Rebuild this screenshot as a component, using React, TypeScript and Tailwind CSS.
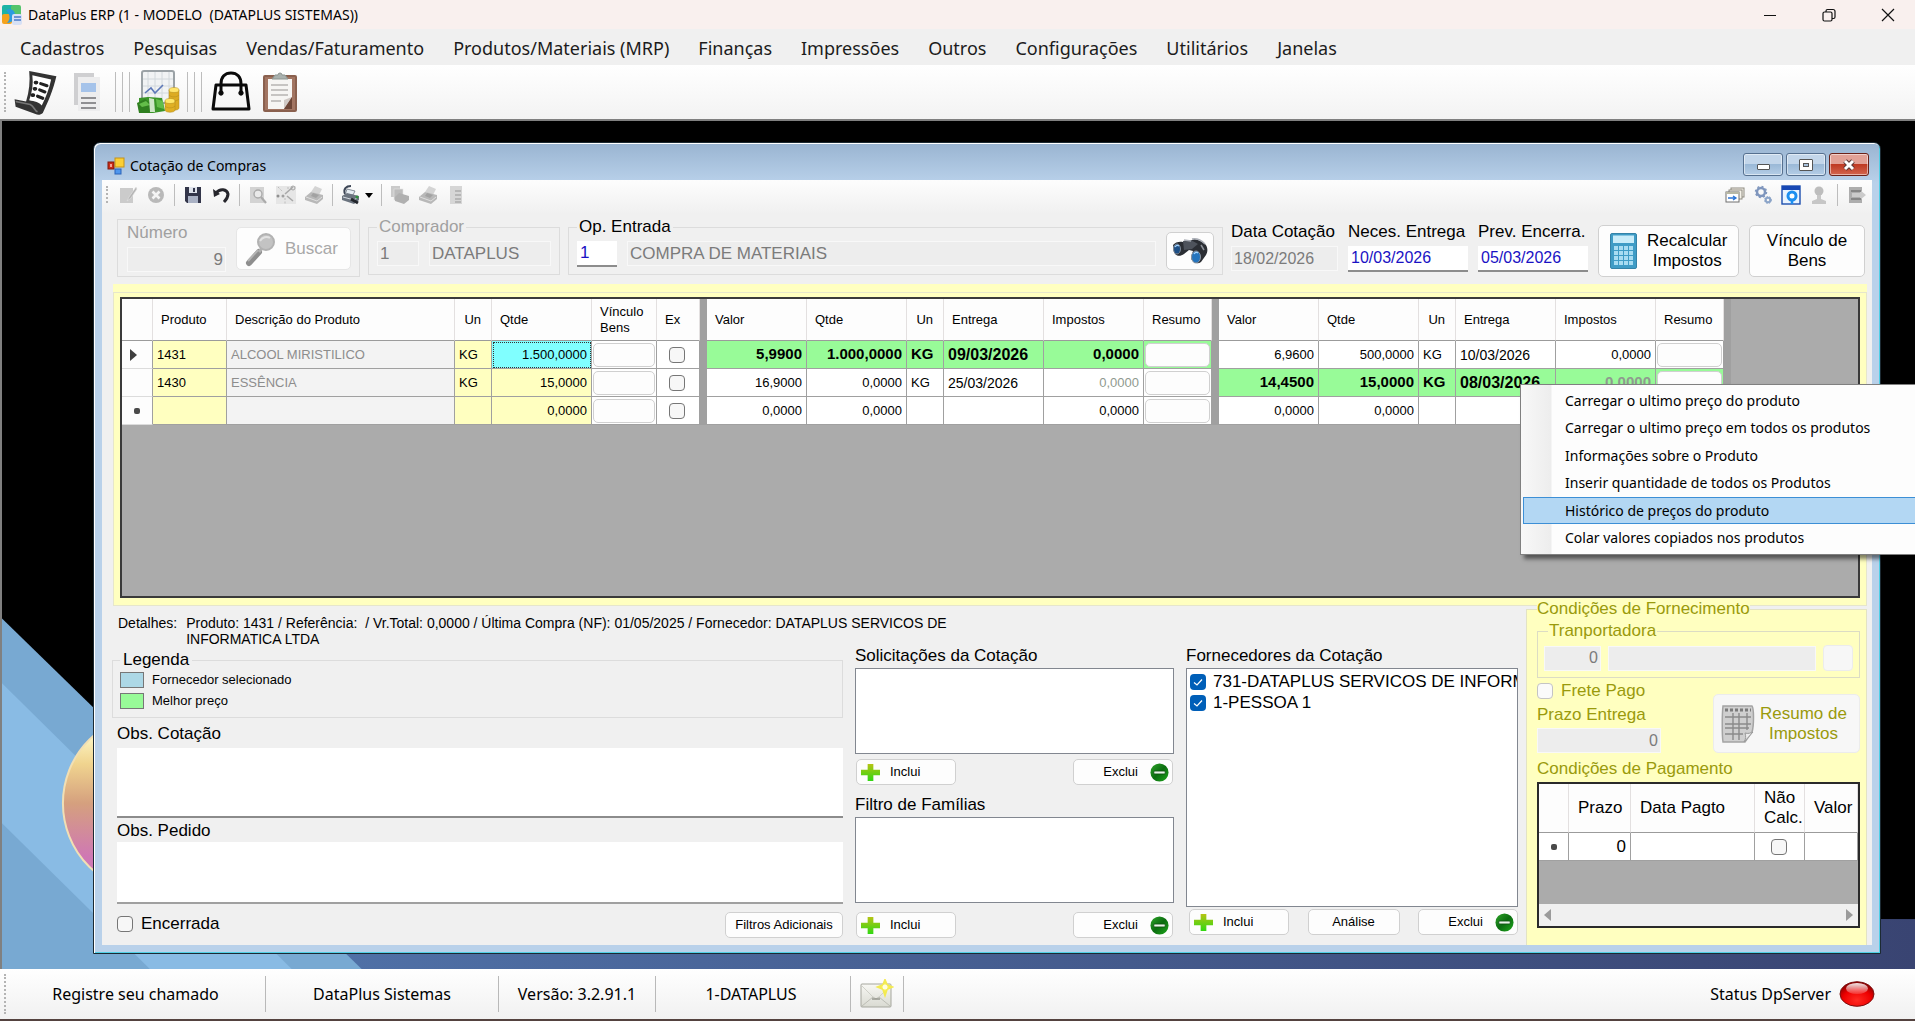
import React, { ReactNode } from "react";

const MENUS = [
  "Cadastros",
  "Pesquisas",
  "Vendas/Faturamento",
  "Produtos/Materiais (MRP)",
  "Finanças",
  "Impressões",
  "Outros",
  "Configurações",
  "Utilitários",
  "Janelas",
];

const CONTEXT_ITEMS = [
  "Carregar o ultimo preço do produto",
  "Carregar o ultimo preço em todos os produtos",
  "Informações sobre o Produto",
  "Inserir quantidade de todos os Produtos",
  "Histórico de preços do produto",
  "Colar valores copiados nos produtos",
];

type Offer = {
  valor: string;
  qtde: string;
  un: string;
  entrega: string;
  impostos: string;
  best?: boolean;
  taxDim?: boolean;
};

type Row = {
  marker: "current" | "none" | "new";
  produto: string;
  descricao: string;
  un: string;
  qtde: string;
  selected?: boolean;
  offers: Offer[];
};

const ROWS: Row[] = [
  {
    marker: "current",
    produto: "1431",
    descricao: "ALCOOL MIRISTILICO",
    un: "KG",
    qtde: "1.500,0000",
    selected: true,
    offers: [
      { valor: "5,9900", qtde: "1.000,0000", un: "KG", entrega: "09/03/2026", impostos: "0,0000", best: true },
      { valor: "6,9600", qtde: "500,0000", un: "KG", entrega: "10/03/2026", impostos: "0,0000" },
    ],
  },
  {
    marker: "none",
    produto: "1430",
    descricao: "ESSÊNCIA",
    un: "KG",
    qtde: "15,0000",
    offers: [
      { valor: "16,9000", qtde: "0,0000", un: "KG", entrega: "25/03/2026", impostos: "0,0000", taxDim: true },
      { valor: "14,4500", qtde: "15,0000", un: "KG", entrega: "08/03/2026", impostos: "0,0000", best: true, taxDim: true },
    ],
  },
  {
    marker: "new",
    produto: "",
    descricao: "",
    un: "",
    qtde: "0,0000",
    offers: [
      { valor: "0,0000", qtde: "0,0000", un: "", entrega: "", impostos: "0,0000" },
      { valor: "0,0000", qtde: "0,0000", un: "", entrega: "", impostos: "0,0000" },
    ],
  },
];

/* ---------- icons ---------- */

function AppLogo() {
  return (
    <svg viewBox="0 0 20 20" className="h-5 w-5">
      <rect x="0" y="0" width="12" height="12" rx="2" fill="#1fb3a6" />
      <rect x="9" y="0" width="10" height="13" rx="2" fill="#55c46c" />
      <rect x="0" y="9" width="10" height="10" rx="2" fill="#f6a21d" />
      <path d="M4 5c6-2 9 1 9 5s-3 8-8 8c4-4 3-9-1-13z" fill="#2b9be0" />
      <rect x="10" y="9" width="10" height="11" rx="2" fill="#d7e0f5" />
      <path d="M12 12h7M12 15h7" stroke="#4a79c9" strokeWidth="1.4" />
    </svg>
  );
}

function ScrollListIcon() {
  return (
    <svg viewBox="2 1 43 44" className="h-[46px] w-[46px]">
      <path d="M17 3l26 5c-3 13-8 25-13 35-2 2-5 2-7 1L4 37l-1-7 11 2c3-9 4-19 3-29z" fill="#333" />
      <path d="M20 7l18 4c-2 9-5 17-9 25-2-3-7-4-12-5 3-8 4-16 3-24z" fill="#fff" />
      <path d="M4 32l14 3c4 2 4 6 7 7" fill="none" stroke="#777" strokeWidth="1.500" />
      <path d="M23 14h1M22 20h1M20 26h1" stroke="#222" strokeWidth="3.500" strokeLinecap="round" />
      <path d="M28 15l6 2M27 21l5 2M25 27l5 2" stroke="#222" strokeWidth="3" strokeLinecap="round" />
    </svg>
  );
}

function NewsIcon() {
  return (
    <svg viewBox="0 0 28 40" className="h-10 w-7">
      <path d="M1 1h20v6H7v26H1z" fill="#cfcfd1" />
      <rect x="5" y="5" width="22" height="34" fill="#ededee" />
      <rect x="8" y="11" width="15" height="9" fill="#a5c3ea" />
      <path d="M8 26h15M8 31h15M8 36h15" stroke="#8f8f92" strokeWidth="2" />
    </svg>
  );
}

function MoneyReportIcon() {
  return (
    <svg viewBox="0 0 44 44" className="h-11 w-11">
      <rect x="6" y="1" width="32" height="32" rx="2" fill="#f1f3f4" stroke="#9ba2a6" strokeWidth="2" />
      <path d="M12 2v30M19 2v30M26 2v30M33 2v30M7 9h30M7 16h30M7 23h30" stroke="#d2d8dc" strokeWidth="1" />
      <path d="M9 23l6-5 4 5 8-8" fill="none" stroke="#5d78b8" strokeWidth="1.600" />
      <g stroke="#b08a1c" strokeWidth="0.500">
        <path d="M33 20v18c0 3 10 3 10 0V20z" fill="#dcab22" />
        <ellipse cx="38" cy="20" rx="5" ry="2.500" fill="#ffe56c" />
        <path d="M33 25c2 2.500 8 2.500 10 0M33 29c2 2.500 8 2.500 10 0" fill="none" />
        <path d="M29 31v9c0 3 10 3 10 0v-9z" fill="#e0b024" />
        <ellipse cx="34" cy="31" rx="5" ry="2.500" fill="#ffe768" />
        <path d="M29 36c2 2.500 8 2.500 10 0" fill="none" />
      </g>
      <path d="M3 28l9-1 14 1 3 13-12 2H3z" fill="#3a9428" />
      <path d="M1 33l8-4 6 5-1 9H3z" fill="#2f7f1f" />
      <path d="M3 34l7-3 4 4-8 2zM20 29l7 2 1 8-7-2z" fill="#63bd49" />
      <path d="M13 28l5 1 1 13h-5z" fill="#cfe6c8" />
    </svg>
  );
}

function BagIcon() {
  return (
    <svg viewBox="0 0 42 42" className="h-[42px] w-[42px]" fill="none" stroke="#0a0a0a">
      <path d="M6 14h30l3 24H3z" strokeWidth="3" strokeLinejoin="round" />
      <path d="M11 22V13C11 6 15 2 21 2s10 4 10 11v9" strokeWidth="3" />
      <circle cx="11" cy="22" r="2.200" fill="#0a0a0a" strokeWidth="1" />
      <circle cx="31" cy="22" r="2.200" fill="#0a0a0a" strokeWidth="1" />
    </svg>
  );
}

function ClipboardIcon() {
  return (
    <svg viewBox="0 0 36 42" className="h-[42px] w-9">
      <rect x="1" y="4" width="34" height="37" rx="2" fill="#8a604e" />
      <rect x="3" y="6" width="30" height="33" fill="#a27562" />
      <path d="M6 8h24v18l-8 12H6z" fill="#f6f5f3" />
      <path d="M30 26l-8 12v-9z" fill="#d0c9c5" />
      <path d="M30 26v12h-8z" fill="#6d4637" />
      <path d="M10 8h16l-3-4h-3a2 2 0 0 0-4 0h-3z" fill="#a9b1ae" stroke="#8b9490" />
      <path d="M9 14h17M9 19h17M9 24h17M9 30h10" stroke="#b6b4b2" strokeWidth="1.600" />
    </svg>
  );
}

function FormIcon() {
  return (
    <svg viewBox="0 0 18 18" className="h-[18px] w-[18px]">
      <rect x="1" y="5" width="6" height="7" fill="#c92c17" stroke="#7f1a0e" />
      <rect x="3" y="7" width="2" height="3" fill="#f3a094" />
      <rect x="8" y="1" width="9" height="9" fill="#fbcf35" stroke="#c4921a" />
      <rect x="8" y="12" width="6" height="5" fill="#4f97ee" stroke="#2b63b8" />
    </svg>
  );
}

type Glyph =
  | "edit" | "cancel" | "save" | "undo" | "preview" | "tools" | "printer" | "printGo"
  | "copyPrint" | "doc" | "cascade" | "gears" | "window" | "user" | "exit";

function ToolGlyph({ kind }: { kind: Glyph }) {
  const body: Record<Glyph, ReactNode> = {
    edit: (
      <>
        <rect x="2" y="3" width="13" height="15" fill="#cbcbcb" />
        <path d="M18 2l-7 10-2 4 4-3 6-9z" fill="#b4b4b4" stroke="#e4e4e4" strokeWidth="0.600" />
      </>
    ),
    cancel: (
      <>
        <circle cx="10" cy="10" r="8" fill="#b9b9b9" />
        <path d="M6.500 6.500l7 7m0-7l-7 7" stroke="#f4f4f4" strokeWidth="2.600" />
      </>
    ),
    save: (
      <>
        <path d="M2 2h16v16H4l-2-2z" fill="#33364a" />
        <rect x="6" y="2" width="8" height="6" fill="#dfe3ec" />
        <rect x="10" y="3" width="2" height="4" fill="#33364a" />
        <rect x="5" y="11" width="10" height="7" fill="#a9b1c4" />
      </>
    ),
    undo: (
      <>
        <path d="M5 8c4-5 11-4 12 1 0 4-2 6-4 8" fill="none" stroke="#26262c" strokeWidth="3" />
        <path d="M2 4l1 8 6-3z" fill="#26262c" />
      </>
    ),
    preview: (
      <>
        <rect x="2" y="2" width="14" height="16" fill="#d3d3d3" />
        <circle cx="10" cy="9" r="4" fill="#e9e9e9" stroke="#ababab" strokeWidth="1.400" />
        <path d="M13 12l5 6" stroke="#ababab" strokeWidth="2.200" />
      </>
    ),
    tools: (
      <>
        <rect x="0" y="1" width="20" height="18" fill="#e6e6e6" />
        <path d="M9 9l8-7M11 11l6 5" stroke="#a8a8a8" strokeWidth="1.600" />
        <path d="M2 2l5 5M9 13v6M12 4V1" stroke="#bcbcbc" strokeDasharray="2 1.500" />
        <circle cx="2" cy="11" r="1.500" fill="#909090" />
        <circle cx="7" cy="11" r="1.500" fill="#a0a0a0" />
        <circle cx="17" cy="3" r="2" fill="none" stroke="#a4a4a4" />
      </>
    ),
    printer: (
      <>
        <path d="M11 1l7 3-3 6-8-3z" fill="#d4d4d4" />
        <path d="M1 12l6-5 12 3v4l-6 5-12-4z" fill="#b8b8b8" />
        <path d="M2 12l11 4 5-4" fill="none" stroke="#dedede" />
        <path d="M9 8l6 2-3 3-5-2z" fill="#a2a2a2" />
      </>
    ),
    printGo: (
      <>
        <path d="M4 9c-2-5 1-8 6-8" fill="none" stroke="#3d4656" strokeWidth="2" />
        <path d="M6 4l8 2-2 4H4z" fill="#e6edf3" stroke="#6a7380" strokeWidth="0.800" />
        <path d="M1 11l5-3 12 3v4l-5 4-12-4z" fill="#6b747f" />
        <path d="M2 12l11 3 4-3" fill="none" stroke="#d6dce2" />
        <path d="M10 14l7 4" stroke="#22262c" strokeWidth="3" />
        <circle cx="16" cy="12" r="1.500" fill="#2d8f3c" />
      </>
    ),
    copyPrint: (
      <>
        <rect x="1" y="1" width="9" height="11" fill="#cacaca" />
        <rect x="4" y="4" width="9" height="11" fill="#bcbcbc" stroke="#e4e4e4" strokeWidth="0.600" />
        <path d="M5 12l4-4 10 3v4l-5 4-9-3z" fill="#b0b0b0" />
      </>
    ),
    doc: (
      <>
        <rect x="4" y="1" width="12" height="18" fill="#d6d6d6" />
        <path d="M9 6h6M9 10h6M9 14h6M9 17h6" stroke="#acacac" strokeWidth="1.500" />
      </>
    ),
    cascade: (
      <>
        <rect x="6" y="3" width="13" height="9" fill="#f6f3ea" stroke="#8d8a80" />
        <rect x="4" y="5" width="13" height="9" fill="#f6f3ea" stroke="#8d8a80" />
        <rect x="1" y="7" width="13" height="10" fill="#fff" stroke="#6f6f6f" />
        <rect x="1" y="7" width="13" height="2" fill="#b8b8a5" />
        <path d="M3 13h8m-3-2l3 2-3 2" fill="none" stroke="#2b74d6" strokeWidth="1.300" />
      </>
    ),
    gears: (
      <>
        <circle cx="8" cy="7" r="4" fill="none" stroke="#7f96bd" strokeWidth="2.500" />
        <circle cx="8" cy="7" r="5.500" fill="none" stroke="#7f96bd" strokeWidth="1.500" strokeDasharray="2 2.300" />
        <circle cx="15" cy="15" r="2.300" fill="none" stroke="#8ba4c8" strokeWidth="2" />
        <circle cx="15" cy="15" r="3.500" fill="none" stroke="#8ba4c8" strokeWidth="1" strokeDasharray="1.500 1.400" />
      </>
    ),
    window: (
      <>
        <rect x="1" y="1" width="18" height="18" fill="#eaf4ff" stroke="#1d4fae" strokeWidth="1.400" />
        <rect x="1" y="1" width="18" height="4" fill="#1848b4" />
        <circle cx="11" cy="11" r="4" fill="#fff" stroke="#1d8ff0" strokeWidth="3" />
        <path d="M11 15v4" stroke="#1d8ff0" strokeWidth="2.500" />
      </>
    ),
    user: (
      <>
        <circle cx="10" cy="6" r="4.500" fill="#bdbdbd" />
        <path d="M8 10h4v4l5 2v3H3v-3l5-2z" fill="#c6c6c6" />
      </>
    ),
    exit: (
      <>
        <rect x="3" y="2" width="13" height="16" fill="#adadad" />
        <path d="M6 8h8V5l6 5-6 5v-3H6z" fill="#cbcbcb" />
        <path d="M5 6h10M5 14h10" stroke="#868686" strokeWidth="2" />
      </>
    ),
  };
  return (
    <svg viewBox="0 0 20 20" className="h-5 w-5">
      {body[kind]}
    </svg>
  );
}

function ToolButton({ kind, label, disabled }: { kind: Glyph; label: string; disabled?: boolean }) {
  return (
    <button type="button" aria-label={label} disabled={disabled} className="shrink-0">
      <ToolGlyph kind={kind} />
    </button>
  );
}

function Separator() {
  return <span className="h-[22px] w-px shrink-0 bg-[#bdbdbd]" />;
}

function Grip({ tall }: { tall?: boolean }) {
  return <span className={`w-0 shrink-0 border-l-2 border-dotted border-[#b4b4b4] ${tall ? "h-10" : "h-5"}`} />;
}

function PlusIcon() {
  return (
    <svg viewBox="0 0 20 20" className="h-[19px] w-[19px]">
      <defs>
        <linearGradient id="plusFill" x1="0" y1="0" x2="0" y2="1">
          <stop offset="0" stopColor="#b6c414" />
          <stop offset="1" stopColor="#2fd813" />
        </linearGradient>
      </defs>
      <path d="M7 1h6v6h7v6h-7v6H7v-6H0V7h7z" fill="url(#plusFill)" />
    </svg>
  );
}

function MinusIcon() {
  return (
    <svg viewBox="0 0 20 20" className="h-[19px] w-[19px]">
      <defs>
        <linearGradient id="minusFill" x1="0" y1="0" x2="1" y2="1">
          <stop offset="0" stopColor="#2fa52a" />
          <stop offset="0.500" stopColor="#0b6d10" />
          <stop offset="1" stopColor="#1fa81c" />
        </linearGradient>
      </defs>
      <circle cx="10" cy="10" r="9.500" fill="url(#minusFill)" />
      <rect x="4" y="8.500" width="12" height="3" rx="1" fill="#e8f4e8" stroke="#0d4a10" strokeWidth="0.800" />
    </svg>
  );
}

function MagnifierIcon() {
  return (
    <svg viewBox="0 0 32 36" className="h-9 w-8">
      <path d="M4 32L14 21" stroke="#8e8e8e" strokeWidth="6" strokeLinecap="round" />
      <path d="M3 30L13 19" stroke="#b4b4b4" strokeWidth="2" />
      <path d="M14 21l3-4" stroke="#b0b0b0" strokeWidth="3" />
      <circle cx="21" cy="11" r="8" fill="#c3c3c3" stroke="#b2b2b2" strokeWidth="2" />
      <path d="M15 10c2-4 7-5 10-3" fill="none" stroke="#e2e2e2" strokeWidth="2" />
    </svg>
  );
}

function BinocularsIcon() {
  return (
    <svg viewBox="0 0 36 28" className="h-7 w-9">
      <path d="M1 8c2-3 7-4 10-3l5 1 4-3c4-2 9 1 13 4 3 3 3 8 1 11l-5 7c-4 3-10 0-10-5l2-6-4-1-5 4c-4 3-9 2-10-2z" fill="#2b2e34" />
      <path d="M11 4l8-1 7 4-6 5-8 1z" fill="#4e535c" />
      <path d="M20 2c5-1 10 2 13 5M12 3l7 1" fill="none" stroke="#a9adb5" strokeWidth="1.500" />
      <ellipse cx="5" cy="12" rx="3.500" ry="5" fill="#1d4f86" stroke="#7f8894" />
      <ellipse cx="24" cy="20" rx="4.500" ry="6" fill="#2474bd" stroke="#8d96a2" />
      <path d="M3 10c1-2 3-2 4-1M22 17c1-2 3-2 4-1" stroke="#a5d5ff" strokeWidth="1.400" fill="none" />
      <path d="M29 8l3 5" stroke="#8d929b" strokeWidth="1.500" />
    </svg>
  );
}

function CalculatorIcon() {
  const keys = [];
  for (let r = 0; r < 4; r++)
    for (let c = 0; c < 4; c++)
      keys.push(<rect key={`${r}-${c}`} x={4 + c * 5} y={13 + r * 5} width="4" height="4" fill="#a8dcf2" />);
  return (
    <svg viewBox="0 0 27 36" className="h-9 w-[27px]">
      <rect x="0.500" y="0.500" width="26" height="35" rx="1.500" fill="#3f9cc6" stroke="#3583a8" />
      <rect x="3" y="2.500" width="21" height="7.500" fill="#c9ecf9" />
      {keys}
    </svg>
  );
}

function TaxSheetIcon() {
  return (
    <svg viewBox="0 0 36 40" className="h-10 w-9">
      <path d="M3 2h29c2 2 2 20 0 26l-7 10H3c-1-6-1-28 0-36z" fill="#cfcfcf" stroke="#a4a4a4" strokeWidth="1.500" />
      <path d="M33 28l-9 10c2-3 2-6 1-9 3 1 6 0 8-1z" fill="#ececec" stroke="#9a9a9a" />
      <path d="M5 6h26" stroke="#7b7b7b" strokeWidth="3" strokeDasharray="3 2" />
      <path d="M5 13h26M5 20h26M5 24h24M5 30h18M13 9v27M19 9v27M27 9v17" stroke="#8a8a8a" strokeWidth="1.400" />
    </svg>
  );
}

function MailIcon() {
  return (
    <svg viewBox="0 0 34 30" className="h-[30px] w-[34px]">
      <defs>
        <linearGradient id="mailFill" x1="0" y1="0" x2="0" y2="1">
          <stop offset="0" stopColor="#f8f8f4" />
          <stop offset="1" stopColor="#d9dad2" />
        </linearGradient>
      </defs>
      <rect x="1" y="5" width="30" height="23" rx="1" fill="url(#mailFill)" stroke="#a5a69d" />
      <path d="M2 27l11-9 3 2 3-2 11 9" fill="none" stroke="#bdbeb5" />
      <path d="M2 7l11 11M30 7L19 18" fill="none" stroke="#cfd0c8" />
      <path d="M12 20h8" stroke="#96978e" strokeWidth="1.500" />
      <path d="M25 1l2 5 5 2-5 2-2 6-2-6-5-2 5-2z" fill="#fdf65a" stroke="#f3ea52" strokeWidth="2" />
      <circle cx="25" cy="8" r="2.500" fill="#fffde0" />
    </svg>
  );
}

function StatusLed() {
  return (
    <svg viewBox="0 0 36 26" className="h-[26px] w-9">
      <defs>
        <radialGradient id="led" cx="0.500" cy="0.750" r="0.700">
          <stop offset="0" stopColor="#ff2a22" />
          <stop offset="0.600" stopColor="#ee0000" />
          <stop offset="1" stopColor="#8b0000" />
        </radialGradient>
        <linearGradient id="ledShine" x1="0" y1="0" x2="0" y2="1">
          <stop offset="0" stopColor="#fff" stopOpacity="0.900" />
          <stop offset="1" stopColor="#fff" stopOpacity="0.150" />
        </linearGradient>
      </defs>
      <ellipse cx="18" cy="13" rx="17" ry="12.300" fill="url(#led)" stroke="#7a1010" />
      <ellipse cx="18" cy="7.500" rx="11" ry="5.500" fill="url(#ledShine)" />
    </svg>
  );
}

function Wallpaper() {
  return (
    <svg
      viewBox="0 0 1915 849"
      preserveAspectRatio="none"
      aria-hidden="true"
      className="absolute inset-0 h-full w-full"
    >
      <defs>
        <linearGradient id="navy" x1="0" y1="0" x2="1" y2="0">
          <stop offset="0" stopColor="#4f70a6" />
          <stop offset="1" stopColor="#394472" />
        </linearGradient>
        <linearGradient id="ball" x1="0" y1="0" x2="0" y2="1">
          <stop offset="0.120" stopColor="#fdf6c4" />
          <stop offset="0.280" stopColor="#f0d48f" />
          <stop offset="0.500" stopColor="#d5a07e" />
          <stop offset="0.800" stopColor="#cf78b4" />
        </linearGradient>
      </defs>
      <rect width="1915" height="849" fill="#000" />
      <rect x="340" y="799" width="1575" height="50" fill="url(#navy)" />
      <path d="M0 498L360 849H0z" fill="#78a9d2" />
      <path d="M0 563L290 849H148L0 703z" fill="#89bbe4" />
      <circle cx="151" cy="683" r="90" fill="url(#ball)" stroke="#f1dfb4" strokeWidth="2" />
    </svg>
  );
}

/* ---------- shared controls ---------- */

const BUTTON = "rounded-[5px] border border-[#d0d0d0] bg-[#fdfdfd]";
const TITLE_FONT = "font-['Noto_Sans',sans-serif]";

function SmallButton({ children, className }: { children: ReactNode; className: string }) {
  return (
    <button type="button" className={`flex h-[26px] items-center text-[13px] ${BUTTON} ${className}`}>
      {children}
    </button>
  );
}

function IncluiButton() {
  return (
    <SmallButton className="w-[100px] gap-[10px] pl-1">
      <PlusIcon />
      <span>Inclui</span>
    </SmallButton>
  );
}

function ExcluiButton() {
  return (
    <SmallButton className="w-[100px] justify-end gap-3 pr-[3px]">
      <span>Exclui</span>
      <MinusIcon />
    </SmallButton>
  );
}

const CHECK =
  "block h-4 w-4 shrink-0 appearance-none rounded-[4px] border border-[#767676] bg-[#f7f7f7]";

function HeadCell({ children, right }: { children?: ReactNode; right?: boolean }) {
  return (
    <th
      scope="col"
      className={`h-[42px] border-r border-b border-r-[#e3e0e0] border-b-[#9b9b9b] bg-[#fdfdfd] font-normal ${
        right ? "pr-[10px] text-right" : "pl-2 text-left"
      }`}
    >
      {children}
    </th>
  );
}

const CELL = "h-7 border-r border-b border-[#a0a0a0] py-0";
const DIVIDER = "bg-[#a0a0a0] p-0";

function OfferCells({ offer }: { offer: Offer }) {
  const fill = offer.best ? "bg-[#98fb98] font-bold text-[15px]" : "bg-white";
  const date = offer.best ? "bg-[#98fb98] font-bold text-base" : "bg-white text-sm";
  const tax = offer.taxDim ? "text-[#8f9a8f]" : "";
  return (
    <>
      <td className={`${CELL} ${fill} pr-1 text-right`}>{offer.valor}</td>
      <td className={`${CELL} ${fill} pr-1 text-right`}>{offer.qtde}</td>
      <td className={`${CELL} ${fill} pl-1`}>{offer.un}</td>
      <td className={`${CELL} ${date} pl-1`}>{offer.entrega}</td>
      <td className={`${CELL} ${fill} ${tax} pr-1 text-right`}>{offer.impostos}</td>
      <td className={`${CELL} ${offer.best ? "bg-[#98fb98]" : "bg-white"} px-px`}>
        <button type="button" aria-label="Resumo" className={`block h-6 w-full ${BUTTON}`} />
      </td>
    </>
  );
}

function OfferHead() {
  return (
    <>
      <HeadCell>Valor</HeadCell>
      <HeadCell>Qtde</HeadCell>
      <HeadCell right>Un</HeadCell>
      <HeadCell>Entrega</HeadCell>
      <HeadCell>Impostos</HeadCell>
      <HeadCell>Resumo</HeadCell>
    </>
  );
}

function OfferCols() {
  return (
    <>
      <col className="w-[7px]" />
      <col className="w-[100px]" />
      <col className="w-[100px]" />
      <col className="w-[37px]" />
      <col className="w-[100px]" />
      <col className="w-[100px]" />
      <col className="w-[68px]" />
    </>
  );
}

function QuoteGrid() {
  return (
    <table className="w-[1609px] table-fixed border-separate border-spacing-0 text-[13px]">
      <colgroup>
        <col className="w-[31px]" />
        <col className="w-[74px]" />
        <col className="w-[228px]" />
        <col className="w-[37px]" />
        <col className="w-[100px]" />
        <col className="w-[65px]" />
        <col className="w-[43px]" />
        <OfferCols />
        <OfferCols />
        <col className="w-[7px]" />
      </colgroup>
      <thead>
        <tr>
          <HeadCell />
          <HeadCell>Produto</HeadCell>
          <HeadCell>Descrição do Produto</HeadCell>
          <HeadCell right>Un</HeadCell>
          <HeadCell>Qtde</HeadCell>
          <HeadCell>
            <span className="block leading-4">
              Vínculo
              <br />
              Bens
            </span>
          </HeadCell>
          <HeadCell>Ex</HeadCell>
          <th className={DIVIDER} />
          <OfferHead />
          <th className={DIVIDER} />
          <OfferHead />
          <th className={DIVIDER} />
        </tr>
      </thead>
      <tbody>
        {ROWS.map((row, i) => (
          <tr key={i}>
            <td className="h-7 border-r border-b border-r-[#a0a0a0] border-b-[#dcdcdc] bg-[#fdfdfd] p-0 text-center">
              {row.marker === "current" && (
                <span className="ml-2 block h-0 w-0 border-y-[6px] border-l-[7px] border-y-transparent border-l-[#3f3f3f]" />
              )}
              {row.marker === "new" && <span className="mx-auto block h-[6px] w-[6px] rounded-[2px] bg-[#4a4a4a]" />}
            </td>
            <td className={`${CELL} bg-[#ffffc0] pl-1`}>{row.produto}</td>
            <td className={`${CELL} bg-[#f3f3f3] pl-1 text-[#8d8d8d]`}>{row.descricao}</td>
            <td className={`${CELL} bg-[#ffffc0] pl-1`}>{row.un}</td>
            <td
              className={`${CELL} pr-1 text-right ${
                row.selected ? "bg-[#80ffff] outline outline-1 -outline-offset-2 outline-dotted outline-[#333]" : "bg-[#ffffc0]"
              }`}
            >
              {row.qtde}
            </td>
            <td className={`${CELL} bg-white px-px`}>
              <button type="button" aria-label="Vínculo Bens" className={`block h-6 w-full ${BUTTON}`} />
            </td>
            <td className={`${CELL} bg-white px-3`}>
              <input type="checkbox" aria-label="Ex" className={CHECK} />
            </td>
            <td className={DIVIDER} />
            <OfferCells offer={row.offers[0]} />
            <td className={DIVIDER} />
            <OfferCells offer={row.offers[1]} />
            <td className={DIVIDER} />
          </tr>
        ))}
      </tbody>
    </table>
  );
}

function ContextMenu() {
  return (
    <ul
      role="menu"
      className={`absolute top-[87px] left-[1400px] z-10 w-[460px] border border-[#808080] bg-[linear-gradient(90deg,#f8f8f8_0,#ededed_30px,#fdfdfd_31px)] p-[2px] text-sm shadow-[4px_4px_4px_rgba(0,0,0,0.5)] ${TITLE_FONT}`}
    >
      {CONTEXT_ITEMS.map((item, i) => (
        <li key={item} role="none">
          <button
            type="button"
            role="menuitem"
            className={`block w-full border pl-[41px] text-left whitespace-nowrap ${
              i % 2 ? "h-[28px]" : "h-[27px]"
            } ${i === 4 ? "border-[#3c8fd6] bg-[#b3d7f3]" : "border-transparent"}`}
          >
            {item}
          </button>
        </li>
      ))}
    </ul>
  );
}

const FIELD_OFF = "h-[25px] border border-[#f8f8f8] bg-[#ededed] px-[2px] text-[#7b7b7b]";
const FIELD_ON = "h-[26px] border-b-2 border-[#8c8c8c] bg-white px-[3px] text-[#1a12c4]";

function DateField({ id, label, value, width, disabled }: { id: string; label: string; value: string; width: string; disabled?: boolean }) {
  return (
    <div className={`shrink-0 ${width}`}>
      <label htmlFor={id} className="block h-[25px] leading-[22px] whitespace-nowrap">
        {label}
      </label>
      <input id={id} defaultValue={value} disabled={disabled} className={`block w-full text-base ${disabled ? FIELD_OFF : FIELD_ON}`} />
    </div>
  );
}

function HeaderForm() {
  return (
    <div className="flex items-end gap-2 pt-[3px] pr-[7px] pb-[7px] pl-[15px] text-[17px]">
      <div className="flex h-[58px] w-[243px] shrink-0 gap-[10px] border border-[#dcdcdc] pl-[9px]">
        <div className="w-[99px]">
          <label htmlFor="numero" className="block h-[27px] text-[#a0a0a0]">Número</label>
          <input id="numero" defaultValue="9" disabled className={`block w-full text-right ${FIELD_OFF}`} />
        </div>
        <button type="button" disabled className={`mt-[7px] flex h-[43px] w-[115px] items-center gap-2 pl-2 text-[#a8a8a8] ${BUTTON} border-[#e6e6e6]`}>
          <MagnifierIcon />
          Buscar
        </button>
      </div>

      <fieldset className="mb-[2px] h-[58px] w-[191px] shrink-0 border border-[#dcdcdc] px-2">
        <legend className="h-5 px-[2px] leading-5 text-[#a0a0a0]">Comprador</legend>
        <div className="flex gap-[10px] pt-1">
          <input aria-label="Código do comprador" defaultValue="1" disabled className={`w-[42px] ${FIELD_OFF}`} />
          <input aria-label="Comprador" defaultValue="DATAPLUS" disabled className={`w-[122px] ${FIELD_OFF}`} />
        </div>
      </fieldset>

      <fieldset className="mb-[2px] h-[58px] min-w-0 flex-1 border border-[#dcdcdc] px-2">
        <legend className="h-5 px-[2px] leading-5">Op. Entrada</legend>
        <div className="flex gap-[10px]">
          <input aria-label="Código da operação" defaultValue="1" className={`mt-1 w-[40px] ${FIELD_ON}`} />
          <input aria-label="Operação de entrada" defaultValue="COMPRA DE MATERIAIS" disabled className={`mt-1 min-w-0 flex-1 ${FIELD_OFF}`} />
          <button type="button" aria-label="Pesquisar operação" className={`-mt-[5px] flex h-[38px] w-12 items-center justify-center ${BUTTON}`}>
            <BinocularsIcon />
          </button>
        </div>
      </fieldset>

      <div className="flex items-end gap-[10px]">
        <div className="mb-[5px] flex gap-[10px]">
          <DateField id="data-cotacao" label="Data Cotação" value="18/02/2026" width="w-[107px]" disabled />
          <DateField id="neces-entrega" label="Neces. Entrega" value="10/03/2026" width="w-[120px]" />
          <DateField id="prev-encerra" label="Prev. Encerra." value="05/03/2026" width="w-[110px]" />
        </div>
        <button type="button" className={`flex h-[52px] w-[141px] shrink-0 items-center gap-[10px] pl-[11px] leading-5 ${BUTTON}`}>
          <CalculatorIcon />
          <span>
            Recalcular
            <br />
            Impostos
          </span>
        </button>
        <button type="button" className={`h-[52px] w-[116px] shrink-0 leading-5 ${BUTTON}`}>
          Vínculo de
          <br />
          Bens
        </button>
      </div>
    </div>
  );
}

function LeftNotes() {
  return (
    <div className="mt-[2px] flex min-w-0 flex-1 flex-col">
      <fieldset className="h-[69px] border border-[#dcdcdc] px-[7px]">
        <legend className="h-[22px] px-[3px] text-[17px] leading-[22px]">Legenda</legend>
        <ul className="flex flex-col gap-[5px] pt-px text-[13px] leading-4">
          <li className="flex items-center gap-2">
            <span className="h-4 w-6 border border-[#777] bg-[#add8e6]" />
            Fornecedor selecionado
          </li>
          <li className="flex items-center gap-2">
            <span className="h-4 w-6 border border-[#777] bg-[#98fb98]" />
            Melhor preço
          </li>
        </ul>
      </fieldset>
      <label htmlFor="obs-cotacao" className="mt-[5px] h-[25px] pl-[5px] text-[17px] leading-[22px]">Obs. Cotação</label>
      <textarea id="obs-cotacao" className="ml-[5px] block h-[70px] resize-none border-b-2 border-[#8c8c8c] bg-white" />
      <label htmlFor="obs-pedido" className="mt-[2px] h-[22px] pl-[5px] text-[17px] leading-[22px]">Obs. Pedido</label>
      <textarea id="obs-pedido" className="ml-[5px] block h-[62px] resize-none border-b-2 border-[#a0a0a0] bg-white" />
      <div className="mt-2 flex items-start justify-between pl-[5px]">
        <label className="flex h-6 items-center gap-2 text-[17px]">
          <input type="checkbox" className={CHECK} />
          Encerrada
        </label>
        <SmallButton className="w-[118px] justify-center">Filtros Adicionais</SmallButton>
      </div>
    </div>
  );
}

function ListBlock({ title, className }: { title: string; className: string }) {
  return (
    <section className={className}>
      <h3 className="h-[21px] text-[17px] leading-[17px]">{title}</h3>
      <div className="h-[86px] border border-[#828790] bg-white" />
    </section>
  );
}

function SupplierList() {
  const suppliers = ["731-DATAPLUS SERVICOS DE INFORM", "1-PESSOA 1"];
  return (
    <div className="w-[332px] shrink-0">
      <h3 className="h-[21px] text-[17px] leading-[17px]">Fornecedores da Cotação</h3>
      <ul className="h-[239px] overflow-hidden border border-[#828790] bg-white px-[3px] pt-[2px] text-[17px]">
        {suppliers.map((name) => (
          <li key={name}>
            <label className="flex h-[21px] items-center gap-[7px] whitespace-nowrap">
              <span className="relative block h-4 w-4 shrink-0">
                <input type="checkbox" defaultChecked className="block h-4 w-4 appearance-none rounded-[4px] bg-[#005fb8]" />
                <svg viewBox="0 0 16 16" className="pointer-events-none absolute inset-0 h-4 w-4">
                  <path d="M4 8.500l3 2.500 5-5.500" fill="none" stroke="#fff" strokeWidth="1.200" />
                </svg>
              </span>
              {name}
            </label>
          </li>
        ))}
      </ul>
      <div className="mt-[2px] flex justify-between pl-[3px]">
        <IncluiButton />
        <SmallButton className="w-[92px] justify-center">Análise</SmallButton>
        <ExcluiButton />
      </div>
    </div>
  );
}

function SupplyTerms() {
  const th = "h-[49px] border-r border-b border-r-[#e3e0e0] border-b-[#9b9b9b] bg-[#fdfdfd] p-0 pl-[9px] text-left font-normal";
  const td = "h-7 border-r border-b border-[#a0a0a0] bg-white p-0";
  return (
    <fieldset className="relative -mt-[7px] w-[341px] min-w-0 shrink-0 border border-b-0 border-[#e3e3c4] bg-[#ffffc0] pr-[6px] pb-4 pl-[10px] text-[17px] text-[#9a9a0c]">
      <legend className="h-5 bg-[#ffffc0] leading-5">Condições de Fornecimento</legend>
      <fieldset className="mt-[2px] h-[57px] min-w-0 border border-[#dcdcc4] px-[6px]">
        <legend className="ml-1 h-5 px-[1px] leading-5">Tranportadora</legend>
        <div className="flex items-center gap-[7px] pt-1 text-base">
          <input aria-label="Código da transportadora" defaultValue="0" disabled className={`w-[57px] text-right ${FIELD_OFF}`} />
          <input aria-label="Transportadora" disabled className={`w-0 min-w-0 flex-1 ${FIELD_OFF}`} />
          <button type="button" aria-label="Pesquisar transportadora" disabled className="h-[26px] w-[30px] rounded-[4px] border border-[#ececec] bg-[#f7f7f7]" />
        </div>
      </fieldset>
      <div className="flex items-end justify-between">
        <div>
          <label className="mt-[2px] flex h-[22px] items-center gap-2">
            <input type="checkbox" disabled className="block h-4 w-4 appearance-none rounded-[4px] border border-[#c4c4c4] bg-[#fafafa]" />
            Frete Pago
          </label>
          <label htmlFor="prazo-entrega" className="mt-[3px] mb-[3px] block h-5 leading-5">Prazo Entrega</label>
          <input id="prazo-entrega" defaultValue="0" disabled className={`block w-[124px] text-right text-base ${FIELD_OFF}`} />
        </div>
        <button type="button" disabled className="flex h-[59px] w-[147px] items-center gap-1 rounded-[5px] border border-[#ececec] bg-[#f7f7f7] pl-[6px] leading-5">
          <TaxSheetIcon />
          <span>
            Resumo de
            <br />
            Impostos
          </span>
        </button>
      </div>
      <h3 className="mt-[6px] mb-[3px] h-5 leading-5">Condições de Pagamento</h3>
      <div className="h-[146px] overflow-hidden border-2 border-[#2a2a2a] bg-[#ababab] text-black">
        <table className="w-full table-fixed border-separate border-spacing-0">
          <colgroup>
            <col className="w-[30px]" />
            <col className="w-[62px]" />
            <col />
            <col className="w-[50px]" />
            <col className="w-[53px]" />
          </colgroup>
          <thead>
            <tr>
              <th className={th} />
              <th className={th}>Prazo</th>
              <th className={th}>Data Pagto</th>
              <th className={`${th} leading-5`}>
                Não
                <br />
                Calc.
              </th>
              <th className={th}>Valor</th>
            </tr>
          </thead>
          <tbody>
            <tr>
              <td className={td}>
                <span className="mx-auto block h-[6px] w-[6px] rounded-[2px] bg-[#4a4a4a]" />
              </td>
              <td className={`${td} pr-1 text-right`}>0</td>
              <td className={td} />
              <td className={`${td} pl-4`}>
                <input type="checkbox" aria-label="Não calcular" className={CHECK} />
              </td>
              <td className={td} />
            </tr>
          </tbody>
        </table>
        <div className="mt-[43px] flex h-[22px] items-center justify-between bg-[#f0f0f0] px-[5px]">
          <span className="h-0 w-0 border-y-[6px] border-r-[7px] border-y-transparent border-r-[#9b9b9b]" />
          <span className="h-0 w-0 border-y-[6px] border-l-[7px] border-y-transparent border-l-[#9b9b9b]" />
        </div>
      </div>
    </fieldset>
  );
}

function WindowButtons() {
  const base = "flex h-[23px] w-10 items-center justify-center rounded-[3px] border shadow-[inset_0_0_0_1px_rgba(255,255,255,0.5)]";
  const blue = "border-[#56708f] bg-[linear-gradient(#c3d6ea_50%,#9bb9d7_50%,#b4cde6)]";
  return (
    <div className="mr-[3px] flex gap-[3px]">
      <button type="button" aria-label="Minimizar" className={`${base} ${blue}`}>
        <span className="mt-1 h-[6px] w-[13px] rounded-[1px] border border-[#555] bg-white" />
      </button>
      <button type="button" aria-label="Maximizar" className={`${base} ${blue}`}>
        <span className="flex h-[12px] w-[14px] items-center justify-center rounded-[1px] border border-[#555] bg-white">
          <span className="h-[4px] w-[6px] border border-[#555] bg-[#a9c2dc]" />
        </span>
      </button>
      <button type="button" aria-label="Fechar" className={`${base} border-[#6b2118] bg-[linear-gradient(#e2a196_50%,#bf3a23_50%,#d3664f)]`}>
        <svg viewBox="0 0 14 12" className="h-3 w-[14px]">
          <path d="M3 2l8 8M11 2l-8 8" stroke="#5c3a38" strokeWidth="5" />
          <path d="M3 2l8 8M11 2l-8 8" stroke="#fff" strokeWidth="3" />
        </svg>
      </button>
    </div>
  );
}

function QuoteWindow() {
  return (
    <div className="relative flex flex-1 flex-col rounded-t-[7px] border border-[#1c2a33] bg-[linear-gradient(#99b4d1,#b9d1ea_40px)] px-2 pb-2 shadow-[inset_1px_1px_0_#fff,inset_-1px_-1px_0_#4fd0e6]">
      <div className="flex h-[37px] shrink-0 items-end justify-between pb-[4px] pl-[5px]">
        <div className={`flex items-center gap-[5px] text-sm ${TITLE_FONT}`}>
          <FormIcon />
          <span>Cotação de Compras</span>
        </div>
        <WindowButtons />
      </div>

      <div className="flex flex-1 flex-col bg-[#f0f0f0]">
        <div className="flex h-[34px] shrink-0 items-center gap-2 bg-[linear-gradient(#fdfdfd,#f0f0f0)] pr-[6px] pb-[4px] pl-1">
          <span className="mr-[2px]">
            <Grip />
          </span>
          <ToolButton kind="edit" label="Editar" disabled />
          <ToolButton kind="cancel" label="Cancelar" disabled />
          <Separator />
          <ToolButton kind="save" label="Salvar" />
          <ToolButton kind="undo" label="Desfazer" />
          <Separator />
          <ToolButton kind="preview" label="Visualizar" disabled />
          <ToolButton kind="tools" label="Ferramentas" disabled />
          <ToolButton kind="printer" label="Imprimir" disabled />
          <Separator />
          <button type="button" aria-label="Opções de impressão" className="flex items-center gap-1">
            <ToolGlyph kind="printGo" />
            <span className="h-0 w-0 border-x-[4px] border-t-[5px] border-x-transparent border-t-black" />
          </button>
          <Separator />
          <ToolButton kind="copyPrint" label="Copiar" disabled />
          <ToolButton kind="printer" label="Imprimir cópia" disabled />
          <ToolButton kind="doc" label="Documento" disabled />
          <span className="flex-1" />
          <ToolButton kind="cascade" label="Cascata" />
          <ToolButton kind="gears" label="Configurar" />
          <ToolButton kind="window" label="Janela" />
          <ToolButton kind="user" label="Usuário" disabled />
          <Separator />
          <ToolButton kind="exit" label="Sair" disabled />
        </div>

        <HeaderForm />

        <div className="mr-[5px] ml-[11px] shrink-0 bg-[#ffffc0] pt-2">
          <div className="border border-[#e6e6cc] pt-1 pr-[6px] pb-[7px] pl-[6px]">
            <div className="relative">
              <div className="h-[301px] overflow-hidden border-2 border-[#3a3a3a] bg-[#ababab]">
                <QuoteGrid />
              </div>
              <ContextMenu />
            </div>
          </div>
        </div>

        <div className="flex flex-1 pr-[5px] pl-[10px]">
          <div className="flex min-w-0 flex-1 flex-col pr-[8px]">
            <div className="flex h-[41px] gap-[9px] pt-[9px] pl-[6px] text-sm leading-4">
              <span>Detalhes:</span>
              <p className="max-w-[790px] whitespace-pre-wrap">
                {"Produto: 1431 / Referência:  / Vr.Total: 0,0000 / Última Compra (NF): 01/05/2025 / Fornecedor: DATAPLUS SERVICOS DE INFORMATICA LTDA"}
              </p>
            </div>
            <div className="flex gap-3">
              <LeftNotes />
              <div className="w-[319px] shrink-0">
                <ListBlock title="Solicitações da Cotação" className="" />
                <div className="mt-[5px] flex justify-between px-px">
                  <IncluiButton />
                  <ExcluiButton />
                </div>
                <ListBlock title="Filtro de Famílias" className="mt-[11px]" />
                <div className="mt-[9px] flex justify-between px-px">
                  <IncluiButton />
                  <ExcluiButton />
                </div>
              </div>
              <SupplierList />
            </div>
          </div>
          <SupplyTerms />
        </div>
      </div>
    </div>
  );
}

function StatusBar() {
  const panel = "flex h-9 items-center justify-center border-r border-[#b9b9b9]";
  return (
    <footer className={`relative flex h-[52px] items-center border-b-2 border-[#54423f] bg-[linear-gradient(#ffffff,#f1f1f1)] pl-1 text-base ${TITLE_FONT}`}>
      <Grip tall />
      <button type="button" className={`${panel} w-[260px]`}>Registre seu chamado</button>
      <span className={`${panel} w-[233px]`}>DataPlus Sistemas</span>
      <span className={`${panel} w-[157px]`}>Versão: 3.2.91.1</span>
      <span className={`${panel} w-[195px] pr-1`}>1-DATAPLUS</span>
      <button type="button" aria-label="Mensagens" className={`${panel} w-[53px]`}>
        <MailIcon />
      </button>
      <span className="ml-auto flex items-center gap-2 pr-10">
        Status DpServer
        <StatusLed />
      </span>
    </footer>
  );
}

export default function App() {
  return (
    <div className="flex min-h-screen flex-col overflow-hidden bg-[#f0f0f0] font-['Liberation_Sans',sans-serif] text-black">
      <header className={`flex h-[29px] items-center bg-[#f9f0ee] pl-[2px] text-sm ${TITLE_FONT}`}>
        <AppLogo />
        <h1 className="ml-[6px] whitespace-pre">{"DataPlus ERP (1 - MODELO  (DATAPLUS SISTEMAS))"}</h1>
        <div className="ml-auto flex items-center gap-[45px] pr-5">
          <button type="button" aria-label="Minimizar">
            <svg viewBox="0 0 14 14" className="h-[14px] w-[14px]"><path d="M1 7.500h12" stroke="#111" /></svg>
          </button>
          <button type="button" aria-label="Restaurar">
            <svg viewBox="0 0 14 14" className="h-[14px] w-[14px]" fill="none" stroke="#111" strokeWidth="1.200">
              <rect x="1" y="4" width="9" height="9" rx="1.500" />
              <path d="M4 4V3c0-1 .5-1.500 1.500-1.500H11c1 0 2 1 2 2V9c0 1-.5 1.500-1.500 1.500H10" />
            </svg>
          </button>
          <button type="button" aria-label="Fechar">
            <svg viewBox="0 0 14 14" className="h-[14px] w-[14px]"><path d="M1 1l12 12M13 1L1 13" stroke="#111" strokeWidth="1.200" /></svg>
          </button>
        </div>
      </header>

      <nav className={`flex h-9 items-center gap-[29px] pt-[2px] pl-5 text-lg text-[#1c1c1c] ${TITLE_FONT}`}>
        {MENUS.map((m) => (
          <button key={m} type="button" className="whitespace-nowrap">{m}</button>
        ))}
      </nav>

      <div className="flex h-[54px] shrink-0 items-center bg-[linear-gradient(#ffffff,#f3f3f3)] pl-1">
        <Grip tall />
        <button type="button" aria-label="Pedidos" className="ml-[7px]"><ScrollListIcon /></button>
        <button type="button" aria-label="Notícias" className="ml-[14px]"><NewsIcon /></button>
        <span className="mr-[6px] ml-[14px] flex gap-[6px]">
          <span className="h-10 w-px bg-[#bdbdbd]" />
          <span className="h-10 w-px bg-[#bdbdbd]" />
          <span className="h-10 w-px bg-[#bdbdbd]" />
        </span>
        <button type="button" aria-label="Financeiro"><MoneyReportIcon /></button>
        <span className="mr-2 ml-[7px] flex gap-[6px]">
          <span className="h-10 w-px bg-[#bdbdbd]" />
          <span className="h-10 w-px bg-[#bdbdbd]" />
          <span className="h-10 w-px bg-[#bdbdbd]" />
        </span>
        <button type="button" aria-label="Compras"><BagIcon /></button>
        <button type="button" aria-label="Cotações" className="ml-[10px]"><ClipboardIcon /></button>
      </div>

      <main className="relative flex flex-1 flex-col overflow-hidden border-t-2 border-l-2 border-[#808080] pt-[21px] pr-[34px] pb-[15px] pl-[91px]">
        <Wallpaper />
        <QuoteWindow />
      </main>

      <StatusBar />
    </div>
  );
}
